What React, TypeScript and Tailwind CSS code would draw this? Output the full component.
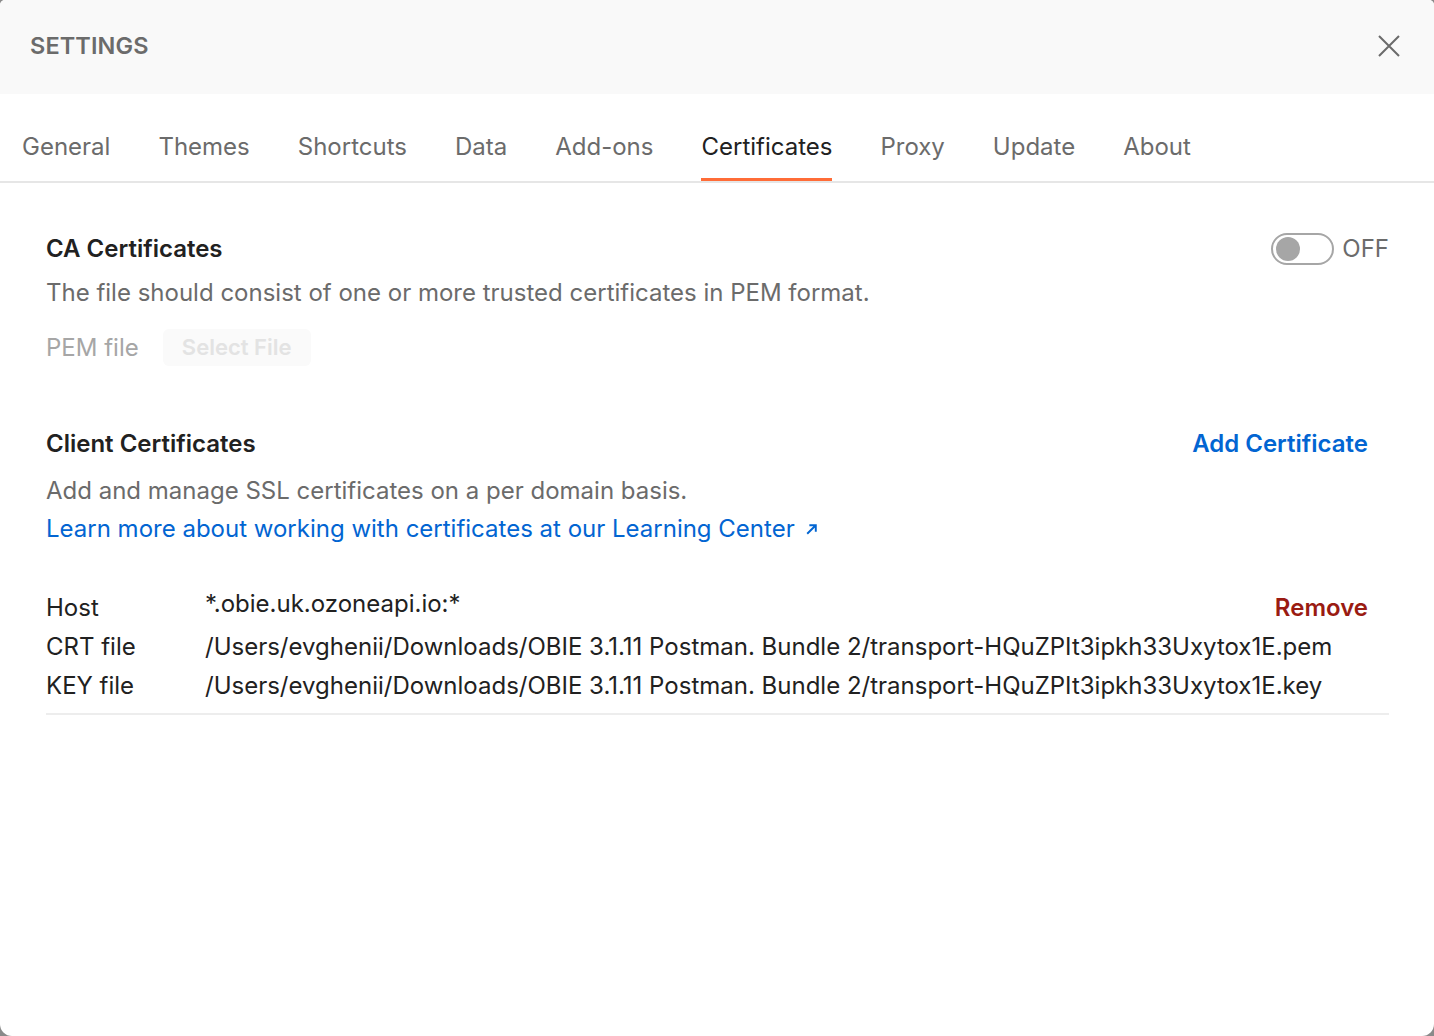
import React from "react";

const tabs = ["General", "Themes", "Shortcuts", "Data", "Add-ons", "Certificates", "Proxy", "Update", "About"];

export default function App() {
  return (
    <div
      className="w-[1434px] h-[1036px] bg-[#8a8a8a] overflow-hidden"
      style={{ fontFamily: "Inter, 'Noto Sans', sans-serif" }}
    >
      <div className="w-full h-full bg-white rounded-t-[5px] rounded-b-[12px] overflow-hidden flex flex-col">
        {/* Header */}
        <div className="h-[94px] bg-[#f9f9f9] flex items-center justify-between pl-[30px] pr-[33px] pb-[3px] shrink-0">
          <div className="text-[23.5px] font-semibold text-[#6b6b6b] tracking-[0.1px]">SETTINGS</div>
          <svg width="24" height="24" viewBox="0 0 24 24" className="text-[#6b6b6b]">
            <path d="M2 2 L22 22 M22 2 L2 22" stroke="currentColor" strokeWidth="2" fill="none" />
          </svg>
        </div>
        {/* Tabs */}
        <div className="h-[89px] border-b-2 border-[#e6e6e6] flex items-stretch pl-[22px] gap-[48px] shrink-0">
          {tabs.map((t) => (
            <div
              key={t}
              className={
                "relative flex items-center text-[24px] pt-[18px] " +
                (t === "Certificates" ? "text-[#212121]" : "text-[#6b6b6b]")
              }
            >
              {t}
              {t === "Certificates" && (
                <div className="absolute left-0 right-0 bottom-[0px] h-[3px] bg-[#ff6c37]" />
              )}
            </div>
          ))}
        </div>
        {/* Content */}
        <div className="pl-[46px] pr-[45px] pt-[50px]">
          {/* CA Certificates */}
          <div className="flex justify-between items-start">
            <div>
              <div className="text-[24px] font-semibold text-[#212121] leading-[32px]">CA Certificates</div>
              <div className="text-[24px] text-[#6b6b6b] leading-[32px] mt-[12px]">
                The file should consist of one or more trusted certificates in PEM format.
              </div>
              <div className="flex items-center mt-[20px]">
                <span className="text-[24px] text-[#a6a6a6]">PEM file</span>
                <div className="ml-[24px] h-[37px] w-[148px] rounded-[6px] bg-[#fafafa] flex items-center justify-center text-[22px] font-semibold text-[#e3e3e3]">
                  Select File
                </div>
              </div>
            </div>
            <div className="flex items-center gap-[8px] -mt-[2px]">
              <div className="w-[63px] h-[32px] rounded-full border-2 border-[#a6a6a6] flex items-center pl-[3px]">
                <div className="w-[24px] h-[24px] rounded-full bg-[#a6a6a6]" />
              </div>
              <span className="text-[24px] text-[#6b6b6b]">OFF</span>
            </div>
          </div>

          {/* Client Certificates */}
          <div className="mt-[62px] flex justify-between items-center pr-[21px]">
            <div className="text-[24px] font-semibold text-[#212121] leading-[32px]">Client Certificates</div>
            <div className="text-[24px] font-semibold text-[#0265d2] leading-[32px]">Add Certificate</div>
          </div>
          <div className="text-[24px] text-[#6b6b6b] leading-[32px] mt-[15px]">
            Add and manage SSL certificates on a per domain basis.
          </div>
          <div className="text-[24px] text-[#0265d2] leading-[32px] mt-[6px] flex items-center">
            Learn more about working with certificates at our Learning Center
            <svg width="15" height="15" viewBox="0 0 14 14" className="ml-[9px] mt-[1px]">
              <path d="M3 11 L11 3 M5 3 H11 V9" stroke="currentColor" strokeWidth="1.8" fill="none" />
            </svg>
          </div>

          {/* Cert entry */}
          <div className="mt-[43px] border-b-2 border-[#ededed] pb-[8px] text-[24px] text-[#212121]">
            <div className="flex items-center h-[39px] pr-[21px]">
              <span className="w-[159px]">Host</span>
              <span className="flex-1 -mt-[8px]">*.obie.uk.ozoneapi.io:*</span>
              <span className="font-semibold text-[#9a1b12]">Remove</span>
            </div>
            <div className="flex items-center h-[39px]">
              <span className="w-[159px]">CRT file</span>
              <span>/Users/evghenii/Downloads/OBIE 3.1.11 Postman. Bundle 2/transport-HQuZPIt3ipkh33Uxytox1E.pem</span>
            </div>
            <div className="flex items-center h-[39px]">
              <span className="w-[159px]">KEY file</span>
              <span>/Users/evghenii/Downloads/OBIE 3.1.11 Postman. Bundle 2/transport-HQuZPIt3ipkh33Uxytox1E.key</span>
            </div>
          </div>
        </div>
      </div>
    </div>
  );
}
